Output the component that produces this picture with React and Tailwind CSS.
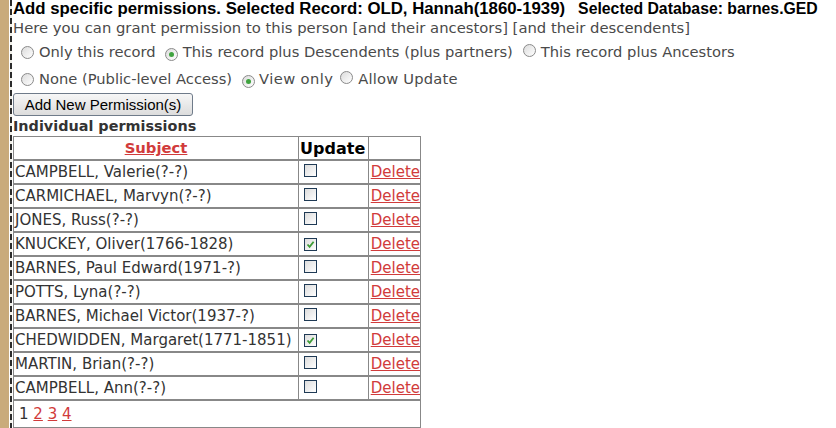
const rows = [
    { name: "CAMPBELL, Valerie(?-?)", on: false },
    { name: "CARMICHAEL, Marvyn(?-?)", on: false },
    { name: "JONES, Russ(?-?)", on: false },
    { name: "KNUCKEY, Oliver(1766-1828)", on: true },
    { name: "BARNES, Paul Edward(1971-?)", on: false },
    { name: "POTTS, Lyna(?-?)", on: false },
    { name: "BARNES, Michael Victor(1937-?)", on: false },
    { name: "CHEDWIDDEN, Margaret(1771-1851)", on: true },
    { name: "MARTIN, Brian(?-?)", on: false },
    { name: "CAMPBELL, Ann(?-?)", on: false },
]

function Radio({ on }) {
    return (
        <span className="inline-flex items-center justify-center w-[13px] h-[13px] rounded-full border border-[#8a8a8a] bg-gradient-to-br from-[#dcdcdc] to-white shrink-0">
            {on && <span className="w-[5px] h-[5px] rounded-full bg-[#3fa33f]" />}
        </span>
    )
}

function Check({ on }) {
    return (
        <span className="inline-flex items-center justify-center w-[13px] h-[13px] border border-[#1f3a55] bg-gradient-to-br from-[#dcdcdc] to-white">
            {on && (
                <svg width="9" height="9" viewBox="0 0 9 9">
                    <path d="M1.5 4.5 L3.6 6.8 L7.6 1.8" fill="none" stroke="#3d9b35" strokeWidth="1.8" />
                </svg>
            )}
        </span>
    )
}

export default function App() {
    return (
        <div className="w-[836px] h-[428px] overflow-hidden bg-white flex font-['DejaVu_Sans',sans-serif]">
            {/* left edge */}
            <div className="w-[9px] bg-[#c9ab7b]" />
            <div className="w-[1px]" />
            <div className="w-[2px] bg-[repeating-linear-gradient(to_bottom,#2b2b2b_0px,#2b2b2b_6px,#f0efe8_6px,#f0efe8_9px)]" />

            <div className="pl-[1px] flex-1">
                <h1 className="flex items-baseline font-['Liberation_Sans',Arial,sans-serif] font-bold leading-[18px] text-black whitespace-nowrap">
                    <span className="text-[16.8px]">Add specific permissions. Selected Record: OLD, Hannah(1860-1939)</span>
                    <span className="ml-[13px] text-[15.8px]">Selected Database: barnes.GED</span>
                </h1>
                <p className="text-[14.8px] leading-[19px] text-[#4a4a4a] whitespace-nowrap">
                    Here you can grant permission to this person [and their ancestors] [and their descendents]
                </p>

                <div className="mt-[4px] flex items-center h-[22px] text-[14.7px] text-[#4a4a4a] pl-[8px] whitespace-nowrap">
                    <Radio />
                    <span className="ml-[5px]">Only this record</span>
                    <span className="ml-[9px]"><Radio on /></span>
                    <span className="ml-[5px]">This record plus Descendents (plus partners)</span>
                    <span className="ml-[10px]"><Radio /></span>
                    <span className="ml-[5px]">This record plus Ancestors</span>
                </div>
                <div className="mt-[5px] flex items-center h-[22px] text-[14.7px] text-[#4a4a4a] pl-[8px] whitespace-nowrap">
                    <Radio />
                    <span className="ml-[5px]">None (Public-level Access)</span>
                    <span className="ml-[10px]"><Radio on /></span>
                    <span className="ml-[4px] tracking-[0.4px]">View only</span>
                    <span className="ml-[7px]"><Radio /></span>
                    <span className="ml-[5px] tracking-[0.2px]">Allow Update</span>
                </div>

                <button className="mt-[3px] block h-[23px] w-[180px] rounded-[3px] border border-[#6f7b8a] bg-gradient-to-b from-[#f7f7f7] to-[#dcdcdc] font-['Liberation_Sans',Arial,sans-serif] text-[15px] leading-none text-black">
                    Add New Permission(s)
                </button>

                <div className="font-bold text-[14.4px] leading-[19px] text-[#333] mt-[1px] whitespace-nowrap">Individual permissions</div>

                <table className="border-separate border-spacing-0 border-t border-l border-[#888] w-[408px] text-[15px] leading-[20px] text-[#333]">
                    <thead>
                        <tr>
                            <th className="h-[24px] leading-[19px] border-r border-b-2 border-[#888] w-[286px] p-0 text-center">
                                <span className="text-[#d13b3b] underline font-bold text-[14.8px]">Subject</span>
                            </th>
                            <th className="h-[24px] leading-[19px] border-r border-b-2 border-[#888] w-[70px] p-0 text-left pl-[1px] text-black font-bold text-[16px]">Update</th>
                            <th className="h-[24px] border-r border-b-2 border-[#888] p-0" />
                        </tr>
                    </thead>
                    <tbody>
                        {rows.map((r) => (
                            <tr key={r.name}>
                                <td className="h-[24px] border-r border-b-2 border-[#888] p-0 pl-[1px] whitespace-nowrap">{r.name}</td>
                                <td className="h-[24px] border-r border-b-2 border-[#888] p-0 pl-[5px] leading-none">
                                    <Check on={r.on} />
                                </td>
                                <td className="h-[24px] border-r border-b-2 border-[#888] p-0 pl-[2px]">
                                    <a className="text-[#d13b3b] underline cursor-pointer">Delete</a>
                                </td>
                            </tr>
                        ))}
                        <tr>
                            <td colSpan={3} className="h-[28px] border-r border-b-2 border-[#888] p-0 pl-[5px]">
                                <span>1</span>{" "}
                                <a className="text-[#d13b3b] underline">2</a>{" "}
                                <a className="text-[#d13b3b] underline">3</a>{" "}
                                <a className="text-[#d13b3b] underline">4</a>
                            </td>
                        </tr>
                    </tbody>
                </table>
            </div>
        </div>
    )
}
